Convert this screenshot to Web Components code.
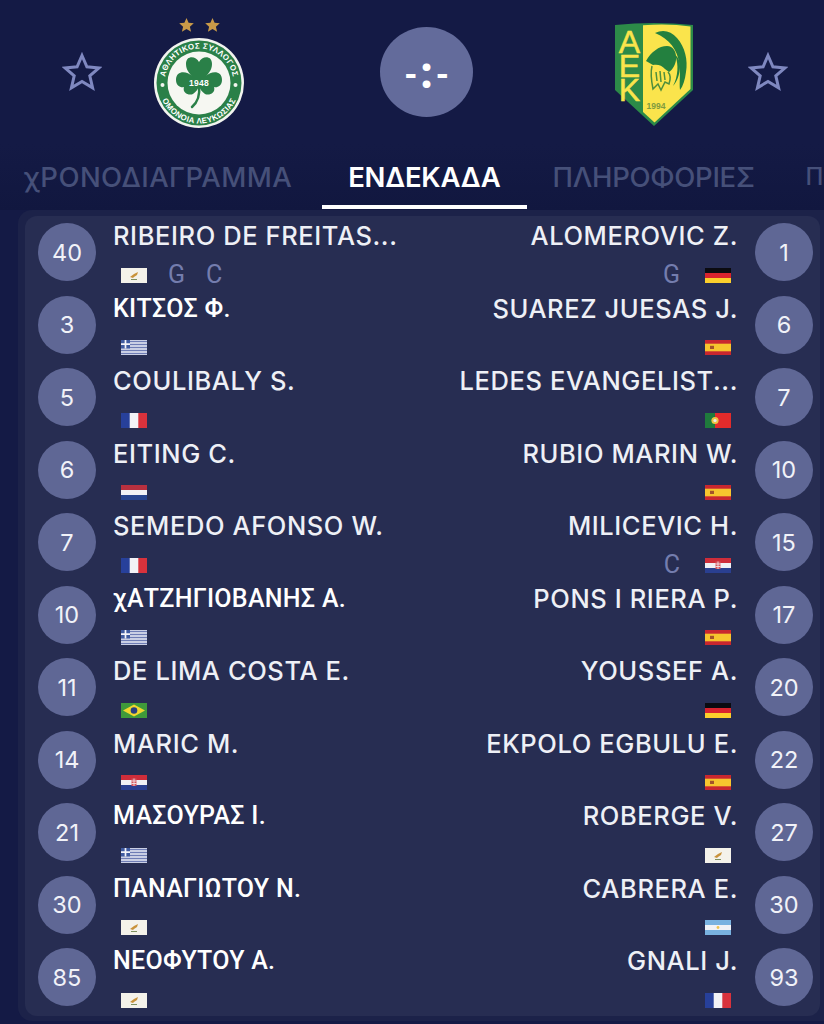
<!DOCTYPE html>
<html lang="el">
<head>
<meta charset="utf-8">
<title>Ενδεκάδα</title>
<style>
    html, body { margin: 0; padding: 0; background: #141a45; }
    body { width: 824px; height: 1024px; overflow: hidden; font-family: "Inter", "Noto Sans", sans-serif; }
</style>
</head>
<body>
<match-page></match-page>
<script>
const FLAGS = {
    cy: `<rect width="26" height="15" fill="#f4f2ea"/><path d="M9 9l4-3 4-2-1 3-3 2-1 1z" fill="#c9923a"/><path d="M10 11.500h6" stroke="#7f9160" stroke-width="1"/>`,
    gr: `<rect width="26" height="15" fill="#e9ebf4"/><path d="M0 1.500h26M0 4.500h26M0 7.500h26M0 10.500h26M0 13.500h26" stroke="#6f7db5" stroke-width="1.400"/><rect width="9" height="8.500" fill="#3e5aa0"/><path d="M4.500 0v8.500M0 4.200h9" stroke="#f3f4fa" stroke-width="1.700"/>`,
    fr: `<rect width="26" height="15" fill="#f2f2f6"/><rect width="8.700" height="15" fill="#27409a"/><rect x="17.300" width="8.700" height="15" fill="#d8323c"/>`,
    nl: `<rect width="26" height="15" fill="#f1f1f5"/><rect width="26" height="5" fill="#b8303f"/><rect y="10" width="26" height="5" fill="#27448f"/>`,
    de: `<rect width="26" height="15" fill="#d9232e"/><rect width="26" height="5" fill="#0b0b10"/><rect y="10" width="26" height="5" fill="#fbcf2c"/>`,
    es: `<rect width="26" height="15" fill="#c9272f"/><rect y="3.700" width="26" height="7.600" fill="#f7c52e"/><rect x="5" y="5.800" width="4" height="3.200" fill="#a4532a"/>`,
    pt: `<rect width="26" height="15" fill="#e22b2b"/><rect width="10" height="15" fill="#1f7a3c"/><circle cx="10" cy="7.500" r="3.600" fill="#edc445"/><circle cx="10" cy="7.500" r="1.600" fill="#e9e9ef"/>`,
    hr: `<rect width="26" height="15" fill="#f0f0f4"/><rect width="26" height="5" fill="#cf2d3a"/><rect y="10" width="26" height="5" fill="#2a3f90"/><rect x="10.500" y="3.500" width="5" height="7.500" fill="#d6545c"/><path d="M10.500 6h5M10.500 8.500h5M13 3.500v7.500" stroke="#f3f3f6" stroke-width=".8"/>`,
    br: `<rect width="26" height="15" fill="#3f9a3a"/><path d="M13 1.500L24 7.500 13 13.500 2 7.500z" fill="#f1d62e"/><circle cx="13" cy="7.500" r="3.300" fill="#27407f"/>`,
    ar: `<rect width="26" height="15" fill="#f1f2f6"/><rect width="26" height="5" fill="#79b2e0"/><rect y="10" width="26" height="5" fill="#79b2e0"/><circle cx="13" cy="7.500" r="1.400" fill="#eec34f"/>`
};

const LEFT = [
    ['40', 'RIBEIRO DE FREITAS...', 'cy', 'G C'],
    ['3', 'ΚΙΤΣΟΣ Φ.', 'gr', ''],
    ['5', 'COULIBALY S.', 'fr', ''],
    ['6', 'EITING C.', 'nl', ''],
    ['7', 'SEMEDO AFONSO W.', 'fr', ''],
    ['10', 'χΑΤΖΗΓΙΟΒΑΝΗΣ Α.', 'gr', ''],
    ['11', 'DE LIMA COSTA E.', 'br', ''],
    ['14', 'MARIC M.', 'hr', ''],
    ['21', 'ΜΑΣΟΥΡΑΣ Ι.', 'gr', ''],
    ['30', 'ΠΑΝΑΓΙΩΤΟΥ Ν.', 'cy', ''],
    ['85', 'ΝΕΟΦΥΤΟΥ Α.', 'cy', '']
];

const RIGHT = [
    ['1', 'ALOMEROVIC Z.', 'de', 'G'],
    ['6', 'SUAREZ JUESAS J.', 'es', ''],
    ['7', 'LEDES EVANGELIST...', 'pt', ''],
    ['10', 'RUBIO MARIN W.', 'es', ''],
    ['15', 'MILICEVIC H.', 'hr', 'C'],
    ['17', 'PONS I RIERA P.', 'es', ''],
    ['20', 'YOUSSEF A.', 'de', ''],
    ['22', 'EKPOLO EGBULU E.', 'es', ''],
    ['27', 'ROBERGE V.', 'cy', ''],
    ['30', 'CABRERA E.', 'ar', ''],
    ['93', 'GNALI J.', 'fr', '']
];

class FavStar extends HTMLElement {
    constructor() {
        super();
        this.attachShadow({ mode: 'open' });
        this.shadowRoot.innerHTML = `
            <style>
                :host { display: block; width: 40px; height: 40px; }
                svg { display: block; }
            </style>
            <svg width="40" height="40" viewBox="0 0 40 40">
                <path d="M20 3.500l4.900 11.300 12.100 1.100-9.200 8 2.800 12-10.600-6.400-10.600 6.400 2.800-12-9.200-8 12.100-1.100z"
                    fill="none" stroke="#7f88c0" stroke-width="3" stroke-linejoin="miter"/>
            </svg>
        `;
    }
}

class OmoniaCrest extends HTMLElement {
    constructor() {
        super();
        this.attachShadow({ mode: 'open' });
        this.shadowRoot.innerHTML = `
            <style>
                :host { display: block; width: 90px; height: 112px; }
                svg { display: block; }
                text { font-family: "Liberation Sans", sans-serif; font-weight: 700; fill: #fff; }
            </style>
            <svg width="90" height="112" viewBox="0 0 90 112">
                <path id="gs" d="M32.500 2l2.100 4.800 5.200.5-3.900 3.400 1.200 5.100-4.600-2.700-4.600 2.700 1.200-5.100-3.900-3.400 5.200-.5z" fill="#c99a48"/>
                <use href="#gs" x="26"/>
                <circle cx="45" cy="67" r="45" fill="#f2f4ef"/>
                <circle cx="45" cy="67" r="42.500" fill="#2a8048"/>
                <circle cx="45" cy="67" r="31.500" fill="#f6f7f2"/>
                <circle cx="8.500" cy="69" r="2" fill="#f2f4ef"/>
                <circle cx="81.500" cy="69" r="2" fill="#f2f4ef"/>
                <defs>
                    <path id="top" d="M10.500 67a34.500 34.500 0 0 1 69 0"/>
                    <path id="bottom" d="M4.500 67a40.500 40.500 0 0 0 81 0"/>
                </defs>
                <text font-size="8" letter-spacing=".3"><textPath href="#top" startOffset="50%" text-anchor="middle">ΑΘΛΗΤΙΚΟΣ ΣΥΛΛΟΓΟΣ</textPath></text>
                <text font-size="8" letter-spacing=".3"><textPath href="#bottom" startOffset="50%" text-anchor="middle">ΟΜΟΝΟΙΑ ΛΕΥΚΩΣΙΑΣ</textPath></text>
                <path d="M45 46C42 40 32 39 32 48C32 54 36 58 38 60C33 55 22 54 22 64C22 70 27 72 30 71C28 77 35 80 39 78C42 76 44 73 45 70C46 73 48 76 51 78C55 80 62 77 60 71C63 72 68 70 68 64C68 54 57 55 52 60C54 58 58 54 58 48C58 39 48 40 45 46Z" fill="#2a8048"/>
                <path d="M45 70C46 78 45 85 38 91" fill="none" stroke="#2a8048" stroke-width="2.500" stroke-linecap="round"/>
                <text x="45" y="69.500" font-size="8.500" text-anchor="middle" letter-spacing=".3">1948</text>
            </svg>
        `;
    }
}

class AekCrest extends HTMLElement {
    constructor() {
        super();
        this.attachShadow({ mode: 'open' });
        this.shadowRoot.innerHTML = `
            <style>
                :host { display: block; width: 78px; height: 104px; margin-top: 4px; }
                svg { display: block; overflow: visible; }
                text { font-family: "Liberation Sans", sans-serif; }
                .letters { writing-mode: vertical-rl; text-orientation: upright; }
            </style>
            <svg width="78" height="104" viewBox="0 0 78 104">
                <path d="M0 3Q39-1 78 3V68L39 104 0 68z" fill="#2c8a48"/>
                <path d="M28 3.200Q55 1.500 75.500 4.500V67L39.500 100.500 28 90z" fill="#fae44c"/>
                <text class="letters" x="14.500" y="2" font-size="32" letter-spacing="-12" fill="#fae44c" stroke="#fae44c" stroke-width=".5">ΑΕΚ</text>
                <path d="M40 11C48 7 56 9 62 16C70 25 73 38 71 50C70 58 68 64 65 68C64 60 66 50 64 40C62 28 55 17 40 11Z" fill="#23803f"/>
                <path d="M60 33C64 42 63 55 58 64C62 60 65 52 65 44C65 39 63 35 60 33Z" fill="#23803f"/>
                <path d="M31 39C36 30 44 24 52 24C58 24 62 30 61 38C60 44 57 48 54 50L50 47C47 43 42 42 38 43Z" fill="#23803f"/>
                <path d="M37 44C35 52 37 62 38 67L43 62 46 68 50 60 54 62C56 56 55 52 53 50M41 50l1 9M45 49l1 11M49 50l1 8" fill="none" stroke="#4e8f3c" stroke-width="1.500"/>
                <text x="41" y="87" font-size="8.500" font-weight="700" text-anchor="middle" fill="#7f9b3f">1994</text>
            </svg>
        `;
    }
}

class ScoreBadge extends HTMLElement {
    constructor() {
        super();
        this.attachShadow({ mode: 'open' });
        this.shadowRoot.innerHTML = `
            <style>
                :host {
                    display: flex; align-items: center; justify-content: center;
                    width: 93px; height: 90px; border-radius: 50%;
                    background: #636b9b; color: #fff;
                    font: 900 35px/1 "Lato", sans-serif;
                }
            </style>
            <slot></slot>
        `;
    }
}

class MatchHeader extends HTMLElement {
    constructor() {
        super();
        this.attachShadow({ mode: 'open' });
        this.shadowRoot.innerHTML = `
            <style>
                :host {
                    display: flex; align-items: center;
                    height: 144px; padding-left: 62px; box-sizing: border-box;
                }
                .home { margin-left: 52px; margin-top: -1px; }
                .score { margin-left: 136px; }
                .away { margin-left: 142px; }
                .fav { margin-left: 55px; }
                b { font-size: 48px; font-weight: 900; margin: 0 3px; position: relative; top: -2px; }
            </style>
            <fav-star></fav-star>
            <omonia-crest class="home"></omonia-crest>
            <score-badge class="score">-<b>:</b>-</score-badge>
            <aek-crest class="away"></aek-crest>
            <fav-star class="fav"></fav-star>
        `;
    }
}

class TabBar extends HTMLElement {
    constructor() {
        super();
        this.attachShadow({ mode: 'open' });
        this.shadowRoot.innerHTML = `
            <style>
                :host {
                    display: flex; height: 66px; margin-left: -2px;
                    overflow: hidden; white-space: nowrap;
                    background: linear-gradient(#141a45, #11173f);
                }
                .tab {
                    flex: none; padding: 15px 26px 0; height: 65px; box-sizing: border-box;
                    font: 500 27.500px/36px "Inter", "Noto Sans", sans-serif;
                    color: #465079;
                }
                .first { letter-spacing: .4px; }
                .third { letter-spacing: -.3px; }
                .last { font-size: 24px; padding: 15px 0 0 25px; }
                .active { color: #fff; font-weight: 600; letter-spacing: -.2px; border-bottom: 4px solid #fff; margin-left: 4px; }
            </style>
            <div class="tab first">χΡΟΝΟΔΙΑΓΡΑΜΜΑ</div>
            <div class="tab active">ΕΝΔΕΚΑΔΑ</div>
            <div class="tab third">ΠΛΗΡΟΦΟΡΙΕΣ</div>
            <div class="tab last">Π</div>
        `;
    }
}

class NationFlag extends HTMLElement {
    constructor() {
        super();
        this.attachShadow({ mode: 'open' });
    }

    connectedCallback() {
        const code = this.getAttribute('code');
        this.shadowRoot.innerHTML = `
            <style>
                :host { display: block; width: 26px; height: 15px; flex: none; }
                svg { display: block; }
            </style>
            <svg width="26" height="15" viewBox="0 0 26 15">${FLAGS[code]}</svg>
        `;
    }
}

class PlayerSide extends HTMLElement {
    constructor() {
        super();
        this.attachShadow({ mode: 'open' });
    }

    connectedCallback() {
        const tags = (this.getAttribute('tags') || '').split(' ').filter(Boolean);
        const name = this.getAttribute('name');
        const greek = /[\u0370-\u03ff]/.test(name);
        this.shadowRoot.innerHTML = `
            <style>
                :host { display: flex; align-items: center; gap: 17px; height: 72.5px; }
                :host([side="away"]) { flex-direction: row-reverse; }
                .num {
                    flex: none; width: 58px; height: 58px; border-radius: 50%;
                    display: flex; align-items: center; justify-content: center;
                    background: #5f6795; color: #f1f2f8;
                    font: 400 23.500px/1 "Inter", sans-serif;
                }
                .info { display: flex; flex-direction: column; height: 100%; }
                :host([side="away"]) .info { align-items: flex-end; }
                .name {
                    padding-top: 2px; font: 500 25.500px/36px "Inter", sans-serif;
                    letter-spacing: .6px; color: #eef0f6; white-space: nowrap;
                }
                .name.greek { font: 500 25px/36px "Roboto", sans-serif; letter-spacing: .3px; color: #fff; }
                .meta {
                    display: flex; align-items: center; gap: 21px;
                    height: 24px; margin: 9px 0 0 8px;
                }
                :host([side="away"]) .meta { flex-direction: row-reverse; gap: 25px; margin: 9px 7px 0 0; }
                .tag { font: 400 25px/24px "Roboto", sans-serif; color: #747dae; }
            </style>
            <div class="num">${this.getAttribute('num')}</div>
            <div class="info">
                <div class="name${greek ? ' greek' : ''}">${name}</div>
                <div class="meta">
                    <nation-flag code="${this.getAttribute('flag')}"></nation-flag>
                    ${tags.map(t => `<span class="tag">${t}</span>`).join('')}
                </div>
            </div>
        `;
    }
}

class LineupList extends HTMLElement {
    constructor() {
        super();
        this.attachShadow({ mode: 'open' });
        const rows = LEFT.map((home, i) => {
            const away = RIGHT[i];
            return `
                <player-side side="home" num="${home[0]}" name="${home[1]}" flag="${home[2]}" tags="${home[3]}"></player-side>
                <player-side side="away" num="${away[0]}" name="${away[1]}" flag="${away[2]}" tags="${away[3]}"></player-side>
            `;
        }).join('');
        this.shadowRoot.innerHTML = `
            <style>
                :host {
                    display: block; margin: 0 0 0 18px; padding: 6px 4px 5px 7px;
                    border-radius: 14px 0 0 14px; background: #1c2249;
                }
                .card {
                    display: grid; grid-template-columns: 1fr 1fr;
                    padding: 0 7px 2px 13px; border-radius: 12px; background: #272d52;
                }
                player-side { min-width: 0; }
            </style>
            <div class="card">${rows}</div>
        `;
    }
}

class MatchPage extends HTMLElement {
    constructor() {
        super();
        this.attachShadow({ mode: 'open' });
        this.shadowRoot.innerHTML = `
            <style>
                :host { display: block; width: 824px; height: 1024px; overflow: hidden; background: #141a45; }
            </style>
            <match-header></match-header>
            <tab-bar></tab-bar>
            <lineup-list></lineup-list>
        `;
    }
}

customElements.define('fav-star', FavStar);
customElements.define('omonia-crest', OmoniaCrest);
customElements.define('aek-crest', AekCrest);
customElements.define('score-badge', ScoreBadge);
customElements.define('match-header', MatchHeader);
customElements.define('tab-bar', TabBar);
customElements.define('nation-flag', NationFlag);
customElements.define('player-side', PlayerSide);
customElements.define('lineup-list', LineupList);
customElements.define('match-page', MatchPage);
</script>
</body>
</html>
